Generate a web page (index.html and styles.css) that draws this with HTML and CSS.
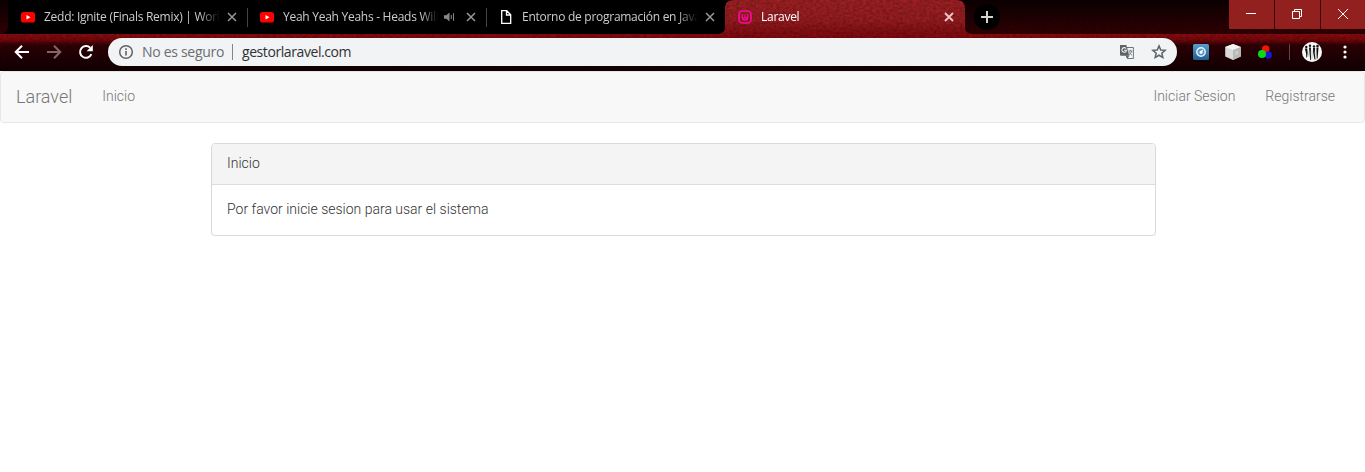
FILE: index.html
```html
<!DOCTYPE html>
<html lang="es">
<head>
<meta charset="utf-8">
<title>Laravel</title>
<link rel="stylesheet" href="styles.css">
</head>
<body>
<header class="chrome">
  <svg class="theme" width="1365" height="71" aria-hidden="true">
    <defs>
      <filter id="grain" x="0" y="0" width="100%" height="100%" color-interpolation-filters="sRGB">
        <feTurbulence type="fractalNoise" baseFrequency="0.3 0.4" numOctaves="4" seed="4" result="n"/>
        <feColorMatrix in="n" type="matrix" values="1 0 0 0 0  1 0 0 0 0  1 0 0 0 0  0 0 0 0 1" result="g"/>
        <feComposite in="SourceGraphic" in2="g" operator="arithmetic" k1="0.5" k2="0.7" k3="0" k4="0" result="m"/>
        <feComposite in="m" in2="SourceAlpha" operator="in"/>
      </filter>
      <linearGradient id="frame" x1="0" y1="0" x2="0" y2="1"><stop offset="0" stop-color="#0b0001"/><stop offset="1" stop-color="#300003"/></linearGradient>
      <linearGradient id="bar" x1="0" y1="0" x2="0" y2="1"><stop offset="0" stop-color="#840b0f"/><stop offset=".16" stop-color="#700609"/><stop offset=".3" stop-color="#2c0004"/><stop offset=".6" stop-color="#200003"/><stop offset="1" stop-color="#100002"/></linearGradient>
      <linearGradient id="tab" x1="0" y1="0" x2="0" y2="1"><stop offset="0" stop-color="#951e21"/><stop offset=".6" stop-color="#8e1a1e"/><stop offset="1" stop-color="#7a0b0f"/></linearGradient>
    </defs>
    <g filter="url(#grain)">
      <rect width="1365" height="34" fill="url(#frame)"/>
      <rect y="34" width="1365" height="37" fill="url(#bar)"/>
    </g>
    <path d="M8 0H733Q725 0 725 8V26Q725 34 717 34H0Q8 34 8 26Z" fill="#000"/>
    <g filter="url(#grain)"><path d="M717 34Q725 34 725 26V8Q725 0 733 0H957Q965 0 965 8V26Q965 34 973 34Z" fill="url(#tab)"/></g>
  </svg>
  <div class="tabstrip">
    <div class="tab">
      <svg class="fav" viewBox="0 0 16 16"><rect x="1" y="3" width="14" height="10.5" rx="2.6" fill="#f00"/><path d="M6.5 6v4.6l4-2.3z" fill="#fff"/></svg>
      <span class="title">Zedd: Ignite (Finals Remix) | Worl</span>
      <svg class="close" viewBox="0 0 10 10"><path d="M1 1l8 8M9 1l-8 8"/></svg>
    </div>
    <div class="tab">
      <svg class="fav" viewBox="0 0 16 16"><rect x="1" y="3" width="14" height="10.5" rx="2.6" fill="#f00"/><path d="M6.5 6v4.6l4-2.3z" fill="#fff"/></svg>
      <span class="title short">Yeah Yeah Yeahs - Heads Will</span>
      <svg class="sound" viewBox="0 0 12 10"><path d="M0 3.3h2.3L5.5.6v8.800L2.300 6.700H0z" fill="#888"/><path d="M7.300 3v4M9.500 1.200v7.600" fill="none" stroke="#888"/></svg>
      <svg class="close" viewBox="0 0 10 10"><path d="M1 1l8 8M9 1l-8 8"/></svg>
    </div>
    <div class="tab last">
      <svg class="fav" viewBox="0 0 16 16"><path d="M3.7 1.700h5l4 4v8.600h-9zM8.500 2v4h4" fill="none" stroke="#fff" stroke-width="1.300"/></svg>
      <span class="title">Entorno de programación en Java</span>
      <svg class="close" viewBox="0 0 10 10"><path d="M1 1l8 8M9 1l-8 8"/></svg>
    </div>
    <div class="tab active">
      <svg class="fav" viewBox="0 0 16 16"><g fill="none" stroke="#fb0a9b"><rect x="2" y="2" width="12" height="12" rx="3.500" stroke-width="1.700"/><path d="M5.200 5v3.200q0 3 2.800 3t2.800-3V5M8 5.500V9M5 8.600q1.500 1 3 0 1.500 1 3 0" stroke-width="1.200"/></g></svg>
      <span class="title">Laravel</span>
      <svg class="close" viewBox="0 0 10 10"><path d="M1 1l8 8M9 1l-8 8"/></svg>
    </div>
    <span class="newtab"><svg width="12" height="12" viewBox="0 0 12 12"><path d="M6 0v12M0 6h12" stroke="#d5d5cd" stroke-width="2"/></svg></span>
    <div class="winbtns">
      <span><svg width="12" height="12" viewBox="0 0 12 12"><path d="M1 5.500h10"/></svg></span>
      <span><svg width="12" height="12" viewBox="0 0 12 12"><path d="M1.500 3.500h7v7h-7zM3.500 3V1.500h7v7H9"/></svg></span>
      <span><svg width="12" height="12" viewBox="0 0 12 12"><path d="M1 1l10 10M11 1L1 11"/></svg></span>
    </div>
  </div>
  <div class="toolbar">
    <svg class="nav" viewBox="0 0 16 16"><path d="M15 8H2M8 1.700L1.700 8 8 14.300" fill="none" stroke="#fff" stroke-width="2"/></svg>
    <svg class="nav" viewBox="0 0 16 16"><path d="M1 8h13M8 1.700L14.300 8 8 14.300" fill="none" stroke="#856568" stroke-width="2"/></svg>
    <svg class="nav" viewBox="0 0 16 16"><path d="M13.400 10.200A5.900 5.900 0 1 1 12.200 3.800" fill="none" stroke="#fff" stroke-width="2"/><path d="M14.800 1v6.200H8.600z" fill="#fff"/></svg>
    <div class="omnibox">
      <svg class="info" viewBox="0 0 16 16"><circle cx="8" cy="8" r="6.300" fill="none" stroke="#5f6368" stroke-width="1.500"/><path d="M8 7v4.600M8 4.300v1.600" stroke="#5f6368" stroke-width="1.600"/></svg>
      <span class="secure">No es seguro</span>
      <span class="url">gestorlaravel.com</span>
      <svg class="translate" viewBox="0 0 16 16"><path d="M7 3.500h7.400v11H8.300L6 9" fill="#f1f3f4" stroke="#70757a"/><path d="M1 1h6.300l3 10.700H2q-1 0-1-1z" fill="#5f6368"/><path d="M7 11.700h3.300L8.500 14.500z" fill="#5f6368"/><path d="M7 4.500A2.300 2.300 0 1 0 7.500 6.200H5.200" fill="none" stroke="#eef0f1" stroke-width="1.100"/><path d="M9.300 7h4M11.300 5.800V7M12.700 7q-.5 2.400-2.500 3.700M10.200 8.300q1 1.700 2.800 3" fill="none" stroke="#70757a" stroke-width=".9"/></svg>
      <svg class="star" viewBox="0 0 16 16"><path d="M8 1.900l1.750 4.050 4.400.4-3.330 2.900 1 4.300L8 11.250l-3.820 2.300 1-4.300-3.330-2.900 4.400-.4z" fill="none" stroke="#5f6368" stroke-width="1.500"/></svg>
    </div>
    <svg class="ext" viewBox="0 0 16 16"><defs><linearGradient id="blue" x2="0" y2="1"><stop stop-color="#5c9dcc"/><stop offset="1" stop-color="#205d91"/></linearGradient></defs><rect width="16" height="16" rx="1.500" fill="url(#blue)"/><circle cx="8" cy="8" r="4.200" fill="#5299ca" stroke="#e8f2fa" stroke-width="1.500"/><path d="M9.800 5.800L8 8" stroke="#fff" stroke-width="1.200"/><circle cx="8" cy="8.200" r="1.500" fill="#fff"/></svg>
    <svg class="ext" viewBox="0 0 16 16"><path d="M8 0l7.800 3v9.500L8 16 .2 12.500V3z" fill="#d9d9d9"/><path d="M8 0l7.800 3L8 6 .2 3z" fill="#f4f4f4"/><path d="M8 6l7.800-3v9.500L8 16z" fill="#b9b9b9"/><path d="M10.400 7.500l2.600-1v3.700l-2.600 1z" fill="#ccc"/></svg>
    <svg class="ext" viewBox="0 0 16 16"><circle cx="8.700" cy="5" r="3.800" fill="#f41400"/><circle cx="11.300" cy="11" r="3.700" fill="#1717d8"/><circle cx="5" cy="10" r="4" fill="#0bd914"/></svg>
    <span class="split"></span>
    <svg class="avatar" viewBox="0 0 20 20"><circle cx="10" cy="10" r="10" fill="#f8f8f8"/><g fill="#111"><circle cx="4.300" cy="5" r="1.200"/><circle cx="8" cy="3.800" r="1.200"/><circle cx="12" cy="4.500" r="1.200"/><circle cx="15.500" cy="4" r="1.300"/><path d="M2.800 6.500h2.400l.5 4-.7 5H4.300L4 11zM7 5.500h2l-.2 5 .3 7.500h-.8l-.7-6zM11 6h2.200l-.5 5 .8 6.500h-1L11.200 11zM14.500 5.500h2l-.4 5-.5 6h-.8l-.3-6z"/></g><path d="M6 10l1 5M10 8v9M14 9v9" stroke="#999" stroke-width=".5"/></svg>
    <svg class="menu" viewBox="0 0 4 14" fill="#fff"><circle cx="2" cy="2" r="1.600"/><circle cx="2" cy="7" r="1.600"/><circle cx="2" cy="12" r="1.600"/></svg>
  </div>
</header>
<nav class="navbar">
  <a class="brand">Laravel</a>
  <a class="link">Inicio</a>
  <div class="right"><a class="link">Iniciar Sesion</a><a class="link">Registrarse</a></div>
</nav>
<main class="container">
  <section class="panel">
    <div class="panel-heading">Inicio</div>
    <div class="panel-body">Por favor inicie sesion para usar el sistema</div>
  </section>
</main>
</body>
</html>
```
FILE: styles.css
```css
* { box-sizing: border-box; }
body { margin: 0; background: #fff; font: 300 14px/22px Roboto, sans-serif; color: #333; overflow: hidden; }
svg { display: block; flex: none; }

.chrome { position: relative; height: 71px; background: #180002; font-family: "Open Sans", "Noto Sans", sans-serif; font-weight: 400; }
.theme { position: absolute; top: 0; left: 0; }
.tabstrip { position: relative; display: flex; height: 34px; padding-left: 8px; }
.tab { position: relative; display: flex; align-items: center; flex: none; width: 239px; height: 34px; padding: 0 10px 0 12px; font-size: 12px; color: #ccc; }
.tab:not(.last):not(.active)::after { content: ""; position: absolute; right: -1px; top: 8px; width: 1px; height: 19px; background: #444; }
.fav { width: 16px; height: 16px; margin-right: 8px; }
.title { width: 176px; white-space: nowrap; letter-spacing: -.27px; -webkit-mask-image: linear-gradient(90deg, #000 155px, transparent); mask-image: linear-gradient(90deg, #000 155px, transparent); }
.short { width: 155px; -webkit-mask-image: linear-gradient(90deg, #000 138px, transparent); mask-image: linear-gradient(90deg, #000 138px, transparent); }
.active { color: #fff; }
.close { width: 10px; height: 10px; margin-left: auto; stroke: #999; stroke-width: 1.5; }
.active .close { stroke: #f0c8c8; stroke-width: 1.8; }
.sound { width: 12px; height: 10px; margin-left: 6px; }
.newtab { display: flex; align-items: center; justify-content: center; width: 26px; height: 26px; margin: 4px 0 0 10px; border-radius: 50%; background: #000; }
.winbtns { display: flex; gap: 1px; height: 29px; margin-left: auto; background: #3b0507; }
.winbtns span { display: flex; align-items: center; width: 45px; padding: 0 0 1px 16px; background: #92201f; }
.winbtns span:last-child { width: 44px; }
.winbtns svg { fill: none; stroke: #fff; }

.toolbar { position: relative; display: flex; align-items: center; height: 37px; padding: 0 18px 1px 14px; }
.nav { width: 16px; height: 16px; margin-right: 16px; }
.nav:nth-child(3) { margin-right: 14px; }
.omnibox { display: flex; align-items: center; width: 1069px; height: 28px; margin-right: 16px; padding: 0 10px; border-radius: 14px; background: #f1f3f4; font-size: 14px; line-height: 28px; color: #303134; }
.info { width: 16px; height: 16px; margin-right: 8px; }
.secure { position: relative; width: 91px; color: #6a6e73; white-space: nowrap; letter-spacing: -.3px; }
.secure::after { content: ""; position: absolute; right: 0; top: 6px; width: 1px; height: 16px; background: #80868b; }
.url { margin-left: 9px; letter-spacing: -.42px; }
.translate { width: 16px; height: 16px; margin-left: auto; margin-right: 16px; }
.star { width: 16px; height: 16px; }
.ext { width: 16px; height: 16px; margin-right: 16px; }
.split { width: 1px; height: 16px; margin-right: 12px; background: #604548; }
.avatar { width: 20px; height: 20px; margin-right: 21px; }
.menu { width: 4px; height: 14px; }

.navbar { display: flex; align-items: center; height: 52px; padding-bottom: 1px; border: 1px solid #e7e7e7; border-radius: 4px; background: #f8f8f8; color: #777; }
.brand { padding: 0 15px; font-size: 18px; }
.link { padding: 0 15px 2px; }
.right { display: flex; margin-left: auto; margin-right: 14px; }
.container { display: flex; justify-content: center; padding: 20px 0 0 2px; }
.panel { width: 945px; border: 1px solid #d9d9d9; border-radius: 4px; box-shadow: 0 1px 1px rgba(0,0,0,.05); }
.panel-heading { height: 41px; padding: 8px 15px; border-bottom: 1px solid #ddd; border-radius: 3px 3px 0 0; background: #f4f4f4; }
.panel-body { height: 50px; padding: 13px 15px; }
```
